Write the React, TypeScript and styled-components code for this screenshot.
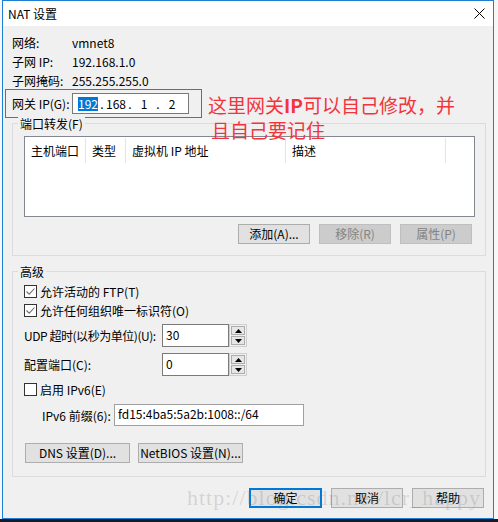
import React from 'react';
import styled, { createGlobalStyle, css } from 'styled-components';

const GlobalStyle = createGlobalStyle`
  html, body {
    margin: 0;
    padding: 0;
  }
  body {
    min-height: 522px;
    background: linear-gradient(#f7f7f7 0 519px, #141a2b 519px);
    font-family: "Noto Sans CJK SC", "Noto Sans", sans-serif;
    font-size: 12px;
    color: #000;
  }
  #root {
    padding-left: 2px;
  }
`;

const Window = styled.div`
  width: 492px;
  box-sizing: border-box;
  border: 1px solid #1c7fd2;
  background: #f0f0f0;
`;

const TitleBar = styled.div`
  height: 25px;
  background: #fff;
  display: flex;
  align-items: center;
  justify-content: space-between;
  padding: 0 8px 0 5px;
`;

const Title = styled.span`
  font-size: 12px;
  line-height: 16px;
`;

const Body = styled.div`
  position: relative;
  padding: 7px 7px 10px 9px;
`;

const InfoRow = styled.div`
  display: grid;
  grid-template-columns: 60px auto;
  align-items: center;
  height: 19px;
  line-height: 19px;
`;

const GatewayRow = styled.div`
  display: grid;
  grid-template-columns: 60px 117px;
  align-items: center;
  width: 197px;
  height: 29px;
  box-sizing: border-box;
  margin: -1px 0 0 -7px;
  padding-left: 6px;
  border: 1px solid #e8383d;
`;

const IpField = styled.div`
  display: flex;
  align-items: center;
  width: 117px;
  height: 21px;
  box-sizing: border-box;
  padding-left: 5px;
  border: 1px solid #7a7a7a;
  background: #fff;
`;

const Octet = styled.span`
  display: flex;
  justify-content: center;
  width: 20px;
  line-height: 14px;
`;

const Selection = styled.span`
  background: #0078d7;
  color: #fff;
`;

const Dot = styled.span`
  width: 8px;
  text-align: center;
  line-height: 14px;
`;

const Annotation = styled.div`
  position: absolute;
  left: 205px;
  top: 66px;
  font-size: 19px;
  line-height: 25px;
  color: #f2343c;
  white-space: nowrap;

  b {
    font-weight: 700;
  }
`;

const AnnotationLine = styled.div<{ $indent?: number }>`
  padding-left: ${(p) => p.$indent || 0}px;
`;

const GroupBox = styled.div<{ $top: number; $bottom: number }>`
  margin-top: ${(p) => p.$top}px;
  padding: 0 10px ${(p) => p.$bottom}px 11px;
  border: 1px solid #dcdcdc;
`;

const Legend = styled.div`
  width: fit-content;
  height: 16px;
  line-height: 16px;
  margin: -8px 0 0 -6px;
  padding: 0 2px;
  background: #f0f0f0;
`;

const ListView = styled.div`
  height: 81px;
  box-sizing: border-box;
  margin-top: 4px;
  border: 1px solid #828790;
  background: #fff;
`;

const ListHeader = styled.div`
  display: grid;
  grid-template-columns: 61px 40px 160px 160px;
  padding-top: 1px;
`;

const HeaderCell = styled.div`
  height: 25px;
  line-height: 25px;
  box-sizing: border-box;
  padding-left: 6px;
  border-right: 1px solid #e5e5e5;
  white-space: nowrap;
`;

const ButtonRow = styled.div<{ $top: number; $end?: boolean; $padX?: number }>`
  display: flex;
  justify-content: ${(p) => (p.$end ? 'flex-end' : 'flex-start')};
  gap: ${(p) => (p.$end ? 9 : 8)}px;
  margin-top: ${(p) => p.$top}px;
  padding: ${(p) => (p.$end ? `0 ${p.$padX || 0}px 0 0` : `0 0 0 ${p.$padX || 0}px`)};
`;

const Button = styled.button<{ $w: number; $default?: boolean }>`
  width: ${(p) => p.$w}px;
  height: 20px;
  box-sizing: border-box;
  padding: 0;
  border: 1px solid #adadad;
  background: #e1e1e1;
  font-family: inherit;
  font-size: 12px;
  line-height: 18px;
  color: #000;

  &:disabled {
    background: #cccccc;
    border-color: #bfbfbf;
    color: #838383;
  }

  ${(p) =>
    p.$default &&
    css`
      border: 2px solid #0078d7;
      line-height: 16px;
    `}
`;

const CheckRow = styled.div<{ $top: number }>`
  display: flex;
  align-items: center;
  gap: 3px;
  height: 19px;
  margin-top: ${(p) => p.$top}px;
`;

const CheckBox = styled.span`
  display: flex;
  width: 13px;
  height: 13px;
  box-sizing: border-box;
  border: 1px solid #333;
  background: #fff;
`;

const FieldRow = styled.div<{ $top: number; $indent?: number }>`
  display: flex;
  align-items: center;
  margin-top: ${(p) => p.$top}px;
  padding-left: ${(p) => p.$indent || 0}px;
`;

const FieldLabel = styled.span<{ $w: number; $tight?: boolean }>`
  width: ${(p) => p.$w}px;
  white-space: nowrap;
  letter-spacing: ${(p) => (p.$tight ? '-0.45px' : 'normal')};
`;

const TextBox = styled.div<{ $w: number; $h: number; $border?: string }>`
  width: ${(p) => p.$w}px;
  height: ${(p) => p.$h}px;
  box-sizing: border-box;
  padding-left: 3px;
  border: 1px solid ${(p) => p.$border || '#7a7a7a'};
  background: #fff;
  line-height: ${(p) => p.$h - 4}px;
`;

const Spinner = styled.div`
  display: flex;
  flex-direction: column;
  gap: 1px;
  width: 18px;
  height: 23px;
  box-sizing: border-box;
  padding: 1px;
  border: 1px solid #cfcfcf;
`;

const SpinButton = styled.div`
  flex: 1;
  display: flex;
  align-items: center;
  justify-content: center;
  border: 1px solid #adadad;
  background: #e6e6e6;
`;

const Footer = styled.div`
  position: relative;
  display: flex;
  justify-content: flex-end;
  gap: 9px;
  margin-top: 11px;
  padding-right: 2px;
`;

const Watermark = styled.div`
  position: absolute;
  left: 175px;
  top: -3px;
  z-index: 1;
  font-family: "Liberation Serif", serif;
  font-size: 22px;
  line-height: 26px;
  letter-spacing: 1px;
  color: rgba(110, 110, 110, 0.22);
  white-space: nowrap;
  pointer-events: none;
`;

const CloseIcon = () => (
  <svg width="11" height="11" viewBox="0 0 11 11">
    <path d="M0.5 0.5 L10.5 10.5 M10.5 0.5 L0.5 10.5" stroke="#000" strokeWidth="1" />
  </svg>
);

const Check = ({ checked }: { checked?: boolean }) => (
  <CheckBox>
    {checked && (
      <svg width="11" height="11" viewBox="0 0 11 11">
        <path d="M1.5 5.5 L4.2 8.2 L9.5 2.5" fill="none" stroke="#6d6d6d" strokeWidth="1.1" />
      </svg>
    )}
  </CheckBox>
);

const Arrow = ({ up }: { up?: boolean }) => (
  <svg width="7" height="4" viewBox="0 0 7 4">
    <path d={up ? 'M0 4 L3.5 0 L7 4 Z' : 'M0 0 L7 0 L3.5 4 Z'} fill="#000" />
  </svg>
);

const SpinField = ({ value }: { value: string }) => (
  <>
    <TextBox $w={67} $h={23}>{value}</TextBox>
    <Spinner>
      <SpinButton><Arrow up /></SpinButton>
      <SpinButton><Arrow /></SpinButton>
    </Spinner>
  </>
);

const info = [
  ['网络:', 'vmnet8'],
  ['子网 IP:', '192.168.1.0'],
  ['子网掩码:', '255.255.255.0'],
];

const columns = ['主机端口', '类型', '虚拟机 IP 地址', '描述'];

const App: React.FC = () => (
  <>
    <GlobalStyle />
    <Window>
      <TitleBar>
        <Title>NAT 设置</Title>
        <CloseIcon />
      </TitleBar>
      <Body>
        {info.map(([label, value]) => (
          <InfoRow key={label}>
            <span>{label}</span>
            <span>{value}</span>
          </InfoRow>
        ))}
        <GatewayRow>
          <span>网关 IP(G):</span>
          <IpField>
            <Octet><Selection>192</Selection></Octet>
            <Dot>.</Dot>
            <Octet>168</Octet>
            <Dot>.</Dot>
            <Octet>1</Octet>
            <Dot>.</Dot>
            <Octet>2</Octet>
          </IpField>
        </GatewayRow>

        <Annotation>
          <AnnotationLine>这里网关<b>IP</b>可以自己修改，并</AnnotationLine>
          <AnnotationLine $indent={3}>且自己要记住</AnnotationLine>
        </Annotation>

        <GroupBox $top={5} $bottom={11}>
          <Legend>端口转发(F)</Legend>
          <ListView>
            <ListHeader>
              {columns.map((c) => (
                <HeaderCell key={c}>{c}</HeaderCell>
              ))}
            </ListHeader>
          </ListView>
          <ButtonRow $top={7} $end $padX={3}>
            <Button $w={72}>添加(A)...</Button>
            <Button $w={72} disabled>移除(R)</Button>
            <Button $w={72} disabled>属性(P)</Button>
          </ButtonRow>
        </GroupBox>

        <GroupBox $top={15} $bottom={13}>
          <Legend>高级</Legend>
          <CheckRow $top={2}>
            <Check checked />
            <span>允许活动的 FTP(T)</span>
          </CheckRow>
          <CheckRow $top={0}>
            <Check checked />
            <span>允许任何组织唯一标识符(O)</span>
          </CheckRow>
          <FieldRow $top={4}>
            <FieldLabel $w={138} $tight>UDP 超时(以秒为单位)(U):</FieldLabel>
            <SpinField value="30" />
          </FieldRow>
          <FieldRow $top={6}>
            <FieldLabel $w={138}>配置端口(C):</FieldLabel>
            <SpinField value="0" />
          </FieldRow>
          <CheckRow $top={4}>
            <Check />
            <span>启用 IPv6(E)</span>
          </CheckRow>
          <FieldRow $top={5} $indent={18}>
            <FieldLabel $w={72}>IPv6 前缀(6):</FieldLabel>
            <TextBox $w={190} $h={22} $border="#a0a0a0">fd15:4ba5:5a2b:1008::/64</TextBox>
          </FieldRow>
          <ButtonRow $top={17} $padX={1}>
            <Button $w={105}>DNS 设置(D)...</Button>
            <Button $w={105}>NetBIOS 设置(N)...</Button>
          </ButtonRow>
        </GroupBox>

        <Footer>
          <Watermark>http://blog.csdn.net/lcr_happy</Watermark>
          <Button $w={73} $default>确定</Button>
          <Button $w={72}>取消</Button>
          <Button $w={72}>帮助</Button>
        </Footer>
      </Body>
    </Window>
  </>
);

export default App;
